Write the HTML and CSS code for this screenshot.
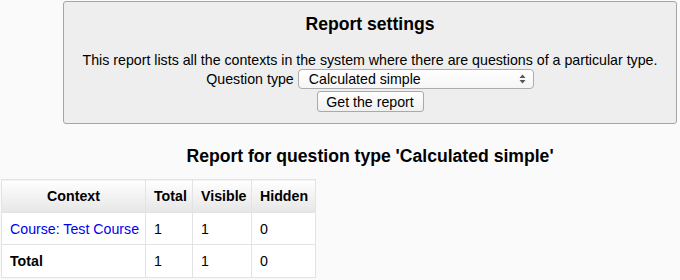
FILE: index.html
```html
<!DOCTYPE html>
<html lang="en">
<head>
    <meta charset="UTF-8">
    <title>Question instances</title>
    <link rel="stylesheet" href="styles.css">
</head>
<body>
    <div class="main">
        <form class="settings">
            <h2 class="settings-title">Report settings</h2>
            <p class="intro">This report lists all the contexts in the system where there are questions of a particular type.</p>
            <div class="field">
                <label for="qtype">Question type</label>
                <div class="select" id="qtype">
                    <span>Calculated simple</span>
                    <svg class="arrows" width="7" height="10" viewBox="0 0 7 10">
                        <path d="M3.5 0.5 L6.5 4 L0.5 4 Z" fill="#555"/>
                        <path d="M3.5 9.5 L6.5 6 L0.5 6 Z" fill="#555"/>
                    </svg>
                </div>
            </div>
            <div class="field">
                <button type="button" class="btn">Get the report</button>
            </div>
        </form>
        <h3 class="report-title">Report for question type 'Calculated simple'</h3>
    </div>

    <table class="report">
        <colgroup>
            <col class="c-context">
            <col class="c-total">
            <col class="c-visible">
            <col class="c-hidden">
        </colgroup>
        <thead>
            <tr>
                <th class="ctx">Context</th>
                <th>Total</th>
                <th>Visible</th>
                <th>Hidden</th>
            </tr>
        </thead>
        <tbody>
            <tr>
                <td><a href="#">Course: Test Course</a></td>
                <td>1</td>
                <td>1</td>
                <td>0</td>
            </tr>
            <tr>
                <td class="bold">Total</td>
                <td>1</td>
                <td>1</td>
                <td>0</td>
            </tr>
        </tbody>
    </table>
</body>
</html>
```

FILE: styles.css
```css
body {
    margin: 0;
    background-color: #fafafa;
    font-family: Helvetica, 'Liberation Sans', Arial, sans-serif;
    font-size: 14.2px;
    color: #000;
}
.main {
    margin: 0 3px 0 63px;
}
.settings {
    margin: 1px 0 0 0;
    background-color: #eee;
    border: 1px solid #a5a5a5;
    border-radius: 3px;
    padding: 12px 0 11px 0;
    text-align: center;
}
.settings-title {
    margin: 0 0 18px 0;
    font-size: 17.6px;
    font-weight: bold;
    line-height: 20px;
}
.intro {
    margin: 0;
    line-height: 17px;
}
.field {
    display: flex;
    justify-content: center;
    align-items: center;
    gap: 4px;
    margin-top: 0;
}
.field label {
    line-height: 17px;
}
.select {
    display: flex;
    align-items: center;
    justify-content: space-between;
    box-sizing: border-box;
    width: 236px;
    height: 20px;
    padding: 0 7px 0 10px;
    background: linear-gradient(#fff, #f6f6f6);
    border: 1px solid #adadad;
    border-radius: 4px;
    text-align: left;
}
.arrows {
    display: block;
}
.btn {
    box-sizing: border-box;
    width: 107px;
    height: 21px;
    margin-top: 2px;
    padding: 0;
    font-family: inherit;
    font-size: 14.2px;
    color: #000;
    background: linear-gradient(#fff, #f0f0f0);
    border: 1px solid #a9a9a9;
    border-radius: 3px;
}
.report-title {
    margin: 21px 0 0 0;
    text-align: center;
    font-size: 17.6px;
    font-weight: bold;
    line-height: 22px;
}
.report {
    margin: 12px 0 0 1px;
    width: 314px;
    table-layout: fixed;
    border-collapse: collapse;
    background-color: #fff;
}
.c-context { width: 144px; }
.c-total { width: 47px; }
.c-visible { width: 59px; }
.c-hidden { width: 64px; }
.report th,
.report td {
    border: 1px solid #e3e3e3;
    padding: 0 0 0 8px;
    text-align: left;
    height: 31px;
    white-space: nowrap;
    overflow: hidden;
}
.report th {
    height: 32px;
    font-weight: bold;
    background: linear-gradient(#fff, #e6e6e6);
}
.report tbody tr:last-child td {
    height: 32px;
}
.report th.ctx {
    text-align: center;
    padding: 0;
}
.report a {
    color: #0000ee;
    text-decoration: none;
}
.bold {
    font-weight: bold;
}
```
